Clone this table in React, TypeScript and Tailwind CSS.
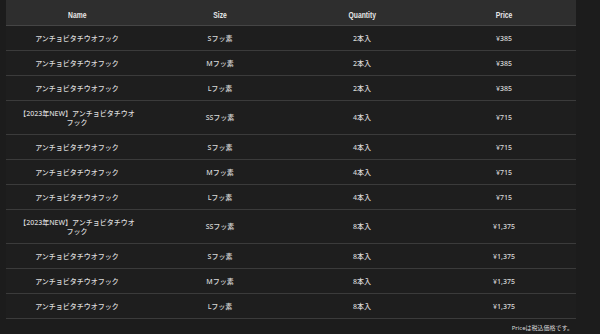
const rows = [
  { name: 'アンチョビタチウオフック', size: 'Sフッ素', qty: '2本入', price: '¥385' },
  { name: 'アンチョビタチウオフック', size: 'Mフッ素', qty: '2本入', price: '¥385' },
  { name: 'アンチョビタチウオフック', size: 'Lフッ素', qty: '2本入', price: '¥385' },
  { name: '【2023年NEW】アンチョビタチウオフック', size: 'SSフッ素', qty: '4本入', price: '¥715' },
  { name: 'アンチョビタチウオフック', size: 'Sフッ素', qty: '4本入', price: '¥715' },
  { name: 'アンチョビタチウオフック', size: 'Mフッ素', qty: '4本入', price: '¥715' },
  { name: 'アンチョビタチウオフック', size: 'Lフッ素', qty: '4本入', price: '¥715' },
  { name: '【2023年NEW】アンチョビタチウオフック', size: 'SSフッ素', qty: '8本入', price: '¥1,375' },
  { name: 'アンチョビタチウオフック', size: 'Sフッ素', qty: '8本入', price: '¥1,375' },
  { name: 'アンチョビタチウオフック', size: 'Mフッ素', qty: '8本入', price: '¥1,375' },
  { name: 'アンチョビタチウオフック', size: 'Lフッ素', qty: '8本入', price: '¥1,375' },
];

const headFont = { fontFamily: '"Liberation Sans", Arial, sans-serif' };
const bodyFont = { fontFamily: '"Noto Sans", "Noto Sans CJK JP", sans-serif' };

export default function App() {
  return (
    <div className="h-[334px] w-[600px] overflow-hidden bg-[#1c1c1c]">
      <div className="ml-[6px] w-[570px]">
        <table className="w-full table-fixed border-collapse" style={bodyFont}>
          <colgroup>
            <col className="w-[142px]" />
            <col className="w-[144px]" />
            <col className="w-[140px]" />
            <col className="w-[144px]" />
          </colgroup>
          <thead>
            <tr className="h-[25px] border-b border-[#454545] bg-[#2e2e2e]">
              {['Name', 'Size', 'Quantity', 'Price'].map((h) => (
                <th key={h} className="p-0 text-center leading-none">
                  <span
                    className="inline-block scale-x-[0.75] text-[9px] font-bold text-[#e8e8e8]"
                    style={headFont}
                  >
                    {h}
                  </span>
                </th>
              ))}
            </tr>
          </thead>
          <tbody className="bg-[#1e1e1e] text-[7px] font-medium leading-[9px] text-[#d9d9d9]">
            {rows.map((r, i) => (
              <tr key={i} className="border-b border-[#3b3b3b]">
                <td className="px-[10px] pt-[8px] pb-[7px] text-center">{r.name}</td>
                <td className="pt-[8px] pb-[7px] text-center">{r.size}</td>
                <td className="pt-[8px] pb-[7px] text-center">{r.qty}</td>
                <td className="pt-[8px] pb-[7px] text-center">{r.price}</td>
              </tr>
            ))}
          </tbody>
        </table>
        <p
          className="mt-[5px] pr-[3px] text-right text-[6px] leading-[9px] text-[#d9d9d9]"
          style={bodyFont}
        >
          Priceは税込価格です。
        </p>
      </div>
    </div>
  );
}
